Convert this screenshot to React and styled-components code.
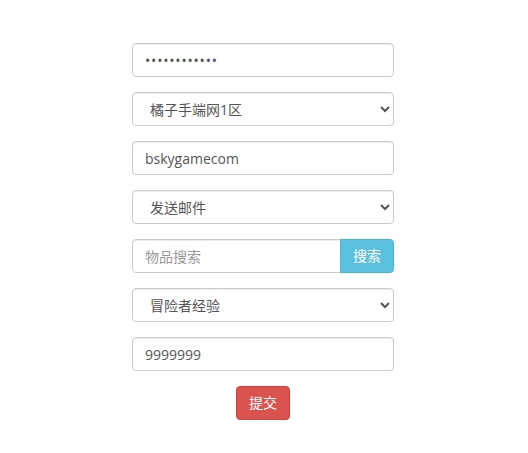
import React from 'react';
import styled, {createGlobalStyle} from 'styled-components';

const GlobalStyle = createGlobalStyle`
  html, body {
    margin: 0;
    padding: 0;
    background: #fff;
  }
  body {
    font-family: 'Open Sans', 'Noto Sans CJK SC', sans-serif;
    font-size: 14px;
    color: #333;
  }
  * {
    box-sizing: border-box;
  }
`;

const Page = styled.div`
  display: flex;
  justify-content: center;
  padding-top: 43px;
  padding-right: 2px;
`;

const Form = styled.form`
  width: 262px;
  display: flex;
  flex-direction: column;
`;

const FormGroup = styled.div`
  margin-bottom: 15px;
  display: flex;
`;

const Control = styled.input`
  display: block;
  width: 100%;
  height: 34px;
  padding: 6px 12px;
  font-family: inherit;
  font-size: 14px;
  line-height: 1.42857;
  color: #555;
  background: #fff;
  border: 1px solid #ccc;
  border-radius: ${p => (p.$joined ? '4px 0 0 4px' : '4px')};
  box-shadow: inset 0 1px 1px rgba(0, 0, 0, 0.075);
  outline: none;
  &[type='password'] {
    letter-spacing: 0.8px;
  }
  &::placeholder {
    color: #999;
  }
`;

const Select = styled.select`
  display: block;
  width: 100%;
  height: 34px;
  padding: 6px 8px 6px 13px;
  font-family: inherit;
  font-size: 14px;
  color: #555;
  background: #fff;
  border: 1px solid #ccc;
  border-radius: 4px;
  box-shadow: inset 0 1px 1px rgba(0, 0, 0, 0.075);
  outline: none;
`;

const Button = styled.button`
  flex: none;
  height: 34px;
  padding: 6px 12px;
  font-family: inherit;
  font-size: 14px;
  line-height: 1.42857;
  color: #fff;
  background: ${p => p.$bg};
  border: 1px solid ${p => p.$border};
  border-radius: ${p => (p.$addon ? '0 4px 4px 0' : '4px')};
  margin-left: ${p => (p.$addon ? '-1px' : '0')};
  cursor: pointer;
`;

const Actions = styled.div`
  display: flex;
  justify-content: center;
`;

export default function App() {
    return (
        <>
            <GlobalStyle/>
            <Page>
                <Form onSubmit={e => e.preventDefault()}>
                    <FormGroup>
                        <Control type="password" defaultValue="aaaaaaaaaaaa"/>
                    </FormGroup>
                    <FormGroup>
                        <Select defaultValue="1">
                            <option value="1">{'橘子手端网1区'}</option>
                        </Select>
                    </FormGroup>
                    <FormGroup>
                        <Control type="text" defaultValue="bskygamecom"/>
                    </FormGroup>
                    <FormGroup>
                        <Select defaultValue="mail">
                            <option value="mail">{'发送邮件'}</option>
                        </Select>
                    </FormGroup>
                    <FormGroup>
                        <Control type="text" placeholder="物品搜索" $joined/>
                        <Button type="button" $bg="#5bc0de" $border="#46b8da" $addon>{'搜索'}</Button>
                    </FormGroup>
                    <FormGroup>
                        <Select defaultValue="exp">
                            <option value="exp">{'冒险者经验'}</option>
                        </Select>
                    </FormGroup>
                    <FormGroup>
                        <Control type="text" defaultValue="9999999"/>
                    </FormGroup>
                    <Actions>
                        <Button type="submit" $bg="#d9534f" $border="#d43f3a">{'提交'}</Button>
                    </Actions>
                </Form>
            </Page>
        </>
    );
}
